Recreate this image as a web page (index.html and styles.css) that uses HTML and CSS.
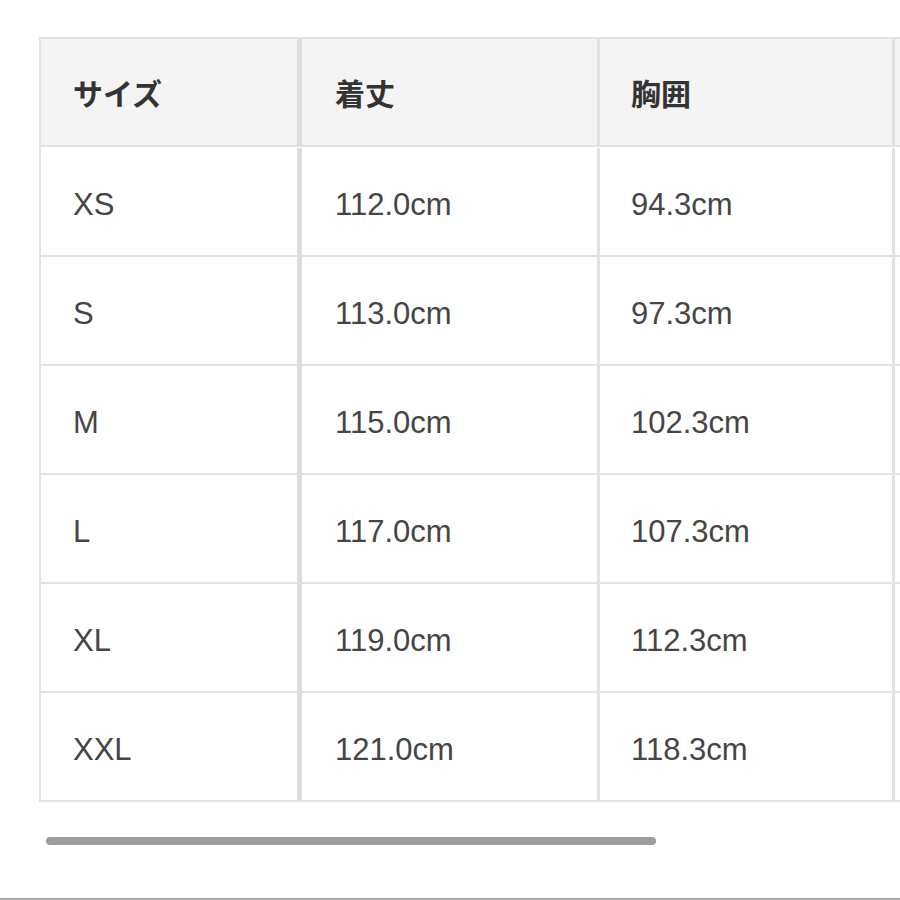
FILE: index.html
```html
<!DOCTYPE html>
<html lang="ja">
<head>
<meta charset="utf-8">
<link rel="stylesheet" href="styles.css">
</head>
<body>
<div class="page">
  <div class="scroller">
    <div class="grid">
      <div class="cell head c1">サイズ</div>
      <div class="cell head c2">着丈</div>
      <div class="cell head c3">胸囲</div>
      <div class="cell head c4"></div>

      <div class="cell c1">XS</div>
      <div class="cell c2">112.0cm</div>
      <div class="cell c3">94.3cm</div>
      <div class="cell c4"></div>

      <div class="cell c1">S</div>
      <div class="cell c2">113.0cm</div>
      <div class="cell c3">97.3cm</div>
      <div class="cell c4"></div>

      <div class="cell c1">M</div>
      <div class="cell c2">115.0cm</div>
      <div class="cell c3">102.3cm</div>
      <div class="cell c4"></div>

      <div class="cell c1">L</div>
      <div class="cell c2">117.0cm</div>
      <div class="cell c3">107.3cm</div>
      <div class="cell c4"></div>

      <div class="cell c1">XL</div>
      <div class="cell c2">119.0cm</div>
      <div class="cell c3">112.3cm</div>
      <div class="cell c4"></div>

      <div class="cell c1">XXL</div>
      <div class="cell c2">121.0cm</div>
      <div class="cell c3">118.3cm</div>
      <div class="cell c4"></div>
    </div>
  </div>
  <div class="scrollbar"></div>
  <div class="spacer"></div>
  <div class="bottom-line"></div>
</div>
</body>
</html>
```

FILE: styles.css
```css
html, body {
  margin: 0;
  padding: 0;
  background: #ffffff;
}

.page {
  width: 900px;
  height: 900px;
  display: flex;
  flex-direction: column;
  overflow: hidden;
}

.scroller {
  margin-top: 37px;
  margin-left: 39px;
  overflow: hidden;
}

.grid {
  display: grid;
  grid-template-columns: 261px 298px 295px 200px;
  grid-auto-rows: 109px;
  border-top: 2px solid #e2e2e2;
  border-left: 2px solid #e2e2e2;
  width: max-content;
}

.cell {
  box-sizing: border-box;
  display: flex;
  align-items: center;
  padding-left: 33px;
  padding-top: 6px;
  border-bottom: 2px solid #e2e2e2;
  border-right: 3px solid #e2e2e2;
  font-family: "Liberation Sans", Arial, "Noto Sans CJK JP", sans-serif;
  font-size: 31px;
  color: #454545;
  background: #ffffff;
}

.cell.c1 {
  padding-left: 32px;
  border-right: 5px solid #dddddd;
}

.cell.c3 {
  padding-left: 31px;
}

.cell.head {
  background: #f4f4f4;
  font-family: "Noto Sans CJK JP", sans-serif;
  font-weight: 700;
  font-size: 30px;
  color: #333333;
  padding-top: 0;
}

.grid > .cell:nth-child(-n+4) {
  height: 108px;
}

.scrollbar {
  margin-top: 35px;
  margin-left: 46px;
  width: 610px;
  height: 8px;
  border-radius: 4px;
  background: #9c9c9c;
  flex: none;
}

.spacer {
  flex: 1;
}

.bottom-line {
  height: 2px;
  background: #a8a8a8;
  flex: none;
}
```
